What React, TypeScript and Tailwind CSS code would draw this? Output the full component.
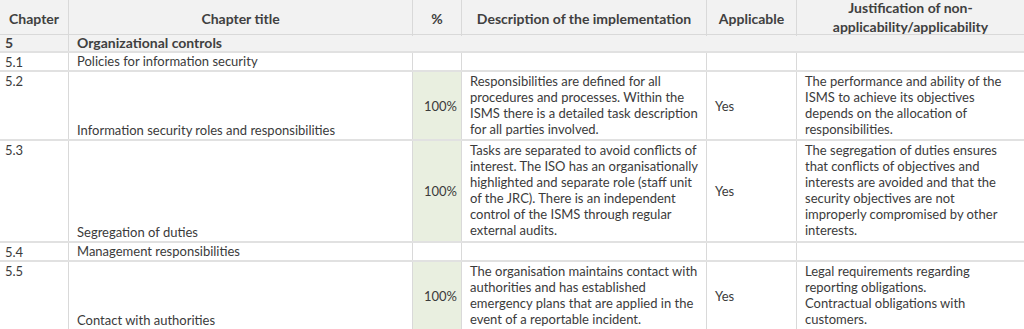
const cols = "grid grid-cols-[69px_344px_49px_245px_90px_1fr]";
const cell = "border-r border-[#d9d9d9]";

type Row = {
  num: string;
  title: string;
  pct?: string;
  desc?: string[];
  applicable?: string;
  just?: string[];
  h: string;
};

const rows: Row[] = [
  { num: "5.1", title: "Policies for information security", h: "h-[19px]" },
  {
    num: "5.2",
    title: "Information security roles and responsibilities",
    pct: "100%",
    desc: [
      "Responsibilities are defined for all",
      "procedures and processes. Within the",
      "ISMS there is a detailed task description",
      "for all parties involved.",
    ],
    applicable: "Yes",
    just: [
      "The performance and ability of the",
      "ISMS to achieve its objectives",
      "depends on the allocation of",
      "responsibilities.",
    ],
    h: "h-[69px]",
  },
  {
    num: "5.3",
    title: "Segregation of duties",
    pct: "100%",
    desc: [
      "Tasks are separated to avoid conflicts of",
      "interest. The ISO has an organisationally",
      "highlighted and separate role (staff unit",
      "of the JRC). There is an independent",
      "control of the ISMS through regular",
      "external audits.",
    ],
    applicable: "Yes",
    just: [
      "The segregation of duties ensures",
      "that conflicts of objectives and",
      "interests are avoided and that the",
      "security objectives are not",
      "improperly compromised by other",
      "interests.",
    ],
    h: "h-[102px]",
  },
  { num: "5.4", title: "Management responsibilities", h: "h-[19px]" },
  {
    num: "5.5",
    title: "Contact with authorities",
    pct: "100%",
    desc: [
      "The organisation maintains contact with",
      "authorities and has established",
      "emergency plans that are applied in the",
      "event of a reportable incident.",
    ],
    applicable: "Yes",
    just: [
      "Legal requirements regarding",
      "reporting obligations.",
      "Contractual obligations with",
      "customers.",
    ],
    h: "h-[69px]",
  },
];

function DataRow({ r }: { r: Row }) {
  return (
    <div className={`${cols} ${r.h} border-b-2 border-[#e1e1e1]`}>
      <div className={`${cell} pl-[5px] pt-[1px]`}>{r.num}</div>
      <div className={`${cell} pl-2 flex items-end pb-[1px]`}>{r.title}</div>
      <div
        className={`${cell} flex items-center justify-end pr-[4px] ${
          r.pct ? "bg-[#e9efe0]" : ""
        }`}
      >
        {r.pct}
      </div>
      <div className={`${cell} pl-2 pt-[1px]`}>
        {r.desc?.map((l) => (
          <div key={l}>{l}</div>
        ))}
      </div>
      <div className={`${cell} pl-2 flex items-center`}>{r.applicable}</div>
      <div className="pl-2 pt-[1px]">
        {r.just?.map((l) => (
          <div key={l}>{l}</div>
        ))}
      </div>
    </div>
  );
}

export default function App() {
  return (
    <div className="w-[1024px] h-[329px] overflow-hidden bg-white text-[13px] leading-[16px] text-[#3b3b3b] font-['Lato',sans-serif]">
      <div
        className={`${cols} h-[35px] bg-[#f2f2f2] border-b border-[#d9d9d9] font-bold text-[14px] text-[#404040] leading-[19px]`}
      >
        <div className={`${cell} flex items-center justify-center`}>Chapter</div>
        <div className={`${cell} flex items-center justify-center`}>Chapter title</div>
        <div className={`${cell} flex items-center justify-center`}>%</div>
        <div className={`${cell} flex items-center justify-center`}>
          Description of the implementation
        </div>
        <div className={`${cell} flex items-center justify-center`}>Applicable</div>
        <div className="flex flex-col items-center justify-center text-center -mt-[2px]">
          <div>Justification of non-</div>
          <div>applicability/applicability</div>
        </div>
      </div>
      <div
        className={`${cols} h-[18px] bg-[#f2f2f2] border-b-2 border-[#e1e1e1] font-bold text-[14px] text-[#404040]`}
      >
        <div className={`${cell} pl-[5px] flex items-center`}>5</div>
        <div className="col-span-5 pl-2 flex items-center">Organizational controls</div>
      </div>
      {rows.map((r) => (
        <DataRow key={r.num} r={r} />
      ))}
    </div>
  );
}
